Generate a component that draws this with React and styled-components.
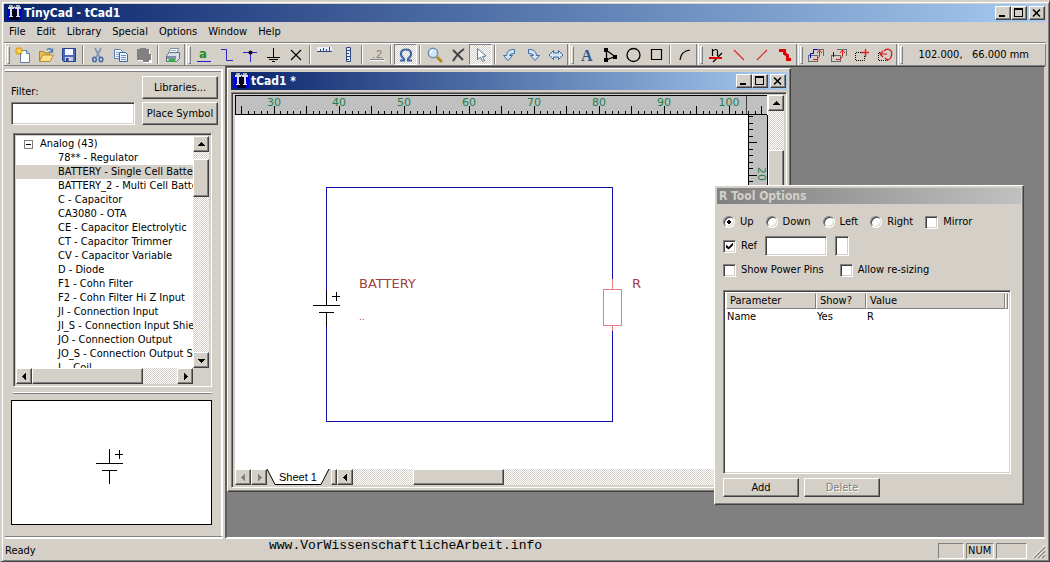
import React from 'react';
import styled, {createGlobalStyle, css} from 'styled-components';

const ui = "'DejaVu Sans Condensed', 'DejaVu Sans', sans-serif";

const raised = css`
  border: 1px solid;
  border-color: #fff #404040 #404040 #fff;
  box-shadow: inset -1px -1px 0 #808080;
`;

const sunken = css`
  border: 1px solid;
  border-color: #808080 #fff #fff #808080;
  box-shadow: inset 1px 1px 0 #404040, inset -1px -1px 0 #d4d0c8;
`;

const hatch = css`
  background: repeating-conic-gradient(#fff 0 25%, #d4d0c8 0 50%) 0 0 / 2px 2px;
`;

const GlobalStyle = createGlobalStyle`
  * {
    box-sizing: border-box;
  }

  body {
    margin: 0;
    background: #d4d0c8;
    font-family: ${ui};
    font-size: 11px;
    line-height: 14px;
    color: #000;
  }

  button, input, table {
    font: inherit;
    color: inherit;
  }

  svg {
    display: block;
    flex: none;
  }
`;

const Frame = styled.div`
  display: flex;
  flex-direction: column;
  min-height: 100vh;
  padding: 2px 3px 0 2px;
  background: #d4d0c8;
  border: 1px solid;
  border-color: #d4d0c8 #404040 #404040 #d4d0c8;
  box-shadow: inset 1px 1px 0 #fff, inset -1px -1px 0 #808080;
  border-top-width: 2px;
  border-left-width: 2px;
`;

const TitleBar = styled.header`
  display: flex;
  align-items: center;
  height: 18px;
  padding: 0 1px 0 3px;
  gap: 2px;
  color: #fff;
  background: linear-gradient(90deg, #0a246a, #a6caf0);
`;

const Title = styled.h1`
  flex: 1;
  margin: 0;
  font-size: 12px;
  line-height: 16px;
  font-weight: bold;
  white-space: nowrap;
`;

const Caption = styled.div`
  display: flex;

  button:last-child {
    margin-left: 2px;
  }
`;

const CaptionButton = styled.button`
  display: flex;
  align-items: center;
  justify-content: center;
  width: 16px;
  height: 14px;
  padding: 0;
  background: #d4d0c8;
  ${raised}
`;

const Menu = styled.nav`
  display: flex;
  align-items: center;
  height: 20px;
  padding-left: 5px;
  gap: 11px;
`;

const MenuItem = styled.button`
  padding: 0;
  border: 0;
  background: none;
`;

const Toolbar = styled.div`
  display: flex;
  height: 24px;
  border-top: 1px solid #808080;
  box-shadow: inset 0 1px 0 #fff;
  padding-top: 1px;
  border-bottom: 1px solid #808080;
`;

const Band = styled.div`
  display: flex;
  align-items: center;
  flex: ${p => (p.$grow ? 1 : 'none')};
  padding-left: 1px;
  margin-left: 1px;
  border-left: 1px solid #fff;
  border-right: 1px solid #808080;
`;

const Grip = styled.span`
  width: 3px;
  height: 18px;
  margin-right: 1px;
  border: 1px solid;
  border-color: #fff #808080 #808080 #fff;
`;

const ToolButton = styled.button`
  display: flex;
  align-items: center;
  justify-content: center;
  width: 23px;
  height: 21px;
  padding: 0;
  border: 1px solid transparent;
  background: none;
  ${p => p.$on && css`
    ${hatch}
    border-color: #808080 #fff #fff #808080;
  `}
`;

const ToolSep = styled.span`
  width: 2px;
  height: 19px;
  margin: 0 2px;
  border-left: 1px solid #808080;
  border-right: 1px solid #fff;
`;

const Position = styled.output`
  flex: 1;
  padding-right: 16px;
  text-align: right;
  white-space: pre;
`;

const Workspace = styled.div`
  display: flex;
  flex: 1;
`;

const Dock = styled.aside`
  display: flex;
  flex-direction: column;
  flex: none;
  width: 221px;
  padding: 3px 2px 2px 1px;
`;

const DockInner = styled.div`
  display: flex;
  flex-direction: column;
  flex: 1;
  padding: 5px 3px 11px 6px;
  border-top: 2px solid #fff;
  border-right: 2px solid #fff;
  border-bottom: 1px solid #808080;
  box-shadow: 0 2px 0 #fff, inset 0 1px 0 #808080;
`;

const FilterRow = styled.div`
  display: grid;
  grid-template-columns: 1fr 76px;
  column-gap: 7px;
  row-gap: 3px;
  padding-bottom: 8px;
`;

const FilterLabel = styled.label`
  align-self: end;
`;

const TextBox = styled.input`
  width: ${p => p.$width || '100%'};
  height: ${p => p.$height || '23px'};
  padding: 2px 4px;
  border-radius: 0;
  outline: 0;
  background: #fff;
  ${sunken}
`;

const PushButton = styled.button`
  height: ${p => p.$height || '23px'};
  padding: 0;
  background: #d4d0c8;
  white-space: nowrap;
  ${raised}

  &:disabled {
    color: #808080;
    text-shadow: 1px 1px 0 #fff;
  }
`;

const Tree = styled.div`
  display: grid;
  grid-template-columns: 1fr 16px;
  grid-template-rows: 232px 16px;
  margin: 0 6px 0 2px;
  padding: 2px;
  background: #d4d0c8;
  ${sunken}
`;

const TreeList = styled.ul`
  margin: 0;
  padding: 1px 0 0;
  overflow: hidden;
  list-style: none;
  background: #fff;
`;

const TreeItem = styled.li`
  display: flex;
  align-items: center;
  gap: 7px;
  height: 14px;
  padding-left: ${p => (p.$root ? 8 : 0)}px;
  margin-left: ${p => (p.$root ? 0 : 42)}px;
  white-space: nowrap;
  background: ${p => (p.$selected ? '#d4d0c8' : 'none')};
  box-shadow: ${p => (p.$selected ? '-42px 0 0 #d4d0c8' : 'none')};
`;

const ScrollBar = styled.div`
  display: flex;
  flex-direction: ${p => (p.$vertical ? 'column' : 'row')};
  min-width: 0;
  flex: ${p => (p.$grow ? 1 : 'none')};
  ${hatch}
`;

const ScrollButton = styled.button`
  display: flex;
  align-items: center;
  justify-content: center;
  flex: none;
  width: 16px;
  height: 16px;
  padding: 0;
  background: #d4d0c8;
  ${raised}
`;

const Thumb = styled.div`
  flex: none;
  background: #d4d0c8;
  margin-top: ${p => (p.$vertical && p.$before) || 0}px;
  margin-left: ${p => (!p.$vertical && p.$before) || 0}px;
  width: ${p => (p.$vertical ? 16 : p.$size)}px;
  height: ${p => (p.$vertical ? p.$size : 16)}px;
  ${raised}
`;

const Spacer = styled.span`
  flex: 1;
`;

const DockRule = styled.hr`
  width: 199px;
  margin: 5px 0 6px 2px;
  border: 0;
  border-top: 1px solid #fff;
  border-bottom: 1px solid #808080;
`;

const Preview = styled.div`
  display: flex;
  flex: 1;
  align-items: center;
  justify-content: center;
  margin-right: 6px;
  padding: 8px 4px 0 0;
  border: 1px solid #000;
  background: #fff;
`;

const Desktop = styled.main`
  position: relative;
  flex: 1;
  background: #808080;
  border: 2px solid;
  border-color: #404040 #d4d0c8 #fff #606060;
  border-top-width: 1px;
`;

// child windows float over the desktop
const ChildWindow = styled.section`
  position: absolute;
  left: 0;
  top: 1px;
  width: 564px;
  height: 424px;
  display: flex;
  flex-direction: column;
  padding: 3px;
  background: #d4d0c8;
  ${raised}
`;

const Client = styled.div`
  display: flex;
  flex-direction: column;
  flex: 1;
  margin-top: 2px;
  padding: 2px 2px 2px 3px;
  ${sunken}
`;

const SheetArea = styled.div`
  display: flex;
  flex: 1;
`;

const Sheet = styled.div`
  display: grid;
  grid-template-columns: 1fr 20px;
  grid-template-rows: 20px 1fr;
  flex: 1;
  background: #fff;
`;

const TopEdge = styled.div`
  grid-column: 1 / 3;
`;

const SheetTabs = styled.footer`
  display: flex;
  height: 16px;
`;

const TabShape = styled.div`
  position: relative;
  display: flex;
  width: 64px;

  svg {
    position: absolute;
    inset: 0;
  }
`;

const SheetTab = styled.button`
  position: relative;
  flex: 1;
  padding: 0 2px 0 0;
  border: 0;
  font-family: 'Liberation Sans', sans-serif;
  background: none;
`;

const Splitter = styled.span`
  width: 6px;
  background: #d4d0c8;
  ${raised}
`;

const ToolWindow = styled.section`
  position: absolute;
  left: 487px;
  top: 118px;
  width: 310px;
  height: 320px;
  display: flex;
  flex-direction: column;
  padding: 2px;
  background: #d4d0c8;
  ${raised}
`;

const ToolTitle = styled.h2`
  margin: 0;
  padding: 0 2px;
  font-size: 12px;
  line-height: 16px;
  font-weight: bold;
  color: #d4d0c8;
  background: linear-gradient(90deg, #808080, #c0c0c0);
`;

const Options = styled.form`
  display: flex;
  flex-direction: column;
  flex: 1;
  padding: 6px 10px 5px 6px;
`;

const OptionRow = styled.div`
  display: flex;
  align-items: center;
  height: 24px;
  gap: ${p => p.$gap}px;
`;

const Choice = styled.label`
  display: flex;
  align-items: center;
  gap: 5px;
  white-space: nowrap;
`;

const Radio = styled.input.attrs({type: 'radio'})`
  appearance: none;
  width: 12px;
  height: 12px;
  margin: 0;
  border-radius: 50%;
  background: #fff;
  ${sunken}

  &:checked {
    background: radial-gradient(circle, #000 2px, #fff 2px);
  }
`;

const Check = styled.input.attrs({type: 'checkbox'})`
  appearance: none;
  display: grid;
  place-items: center;
  width: 13px;
  height: 13px;
  margin: 0;
  background: #fff;
  ${sunken}

  &:checked::before {
    content: '';
    width: 7px;
    height: 7px;
    background: #000;
    clip-path: polygon(0 30%, 38% 65%, 100% 0, 100% 40%, 38% 100%, 0 70%);
  }
`;

const ParamBox = styled.div`
  flex: 1;
  margin: 8px 0 4px;
  padding: 2px;
  background: #fff;
  ${sunken}
`;

const ParamTable = styled.table`
  width: 100%;
  border-collapse: separate;
  border-spacing: 0;
  table-layout: fixed;

  th {
    height: 16px;
    padding: 0 3px;
    font-weight: normal;
    text-align: left;
    background: #d4d0c8;
    border: 1px solid;
    border-color: #d4d0c8 #808080 #808080 #fff;
  }

  td {
    height: 15px;
    padding: 0 1px;
  }
`;

const Buttons = styled.div`
  display: grid;
  grid-template-columns: 76px 76px;
  gap: 5px;
`;

const StatusBar = styled.footer`
  display: flex;
  align-items: center;
  height: 22px;
  gap: 2px;
  padding: 1px 0 0 1px;
`;

const StatusText = styled.span`
  width: 262px;
`;

const SiteName = styled.span`
  flex: 1;
  align-self: flex-start;
  font-family: 'Liberation Mono', monospace;
  font-size: 13px;
  line-height: 12px;
`;

const Pane = styled.span`
  width: ${p => p.$width}px;
  height: 16px;
  padding-left: 1px;
  border: 1px solid;
  border-color: #808080 #fff #fff #808080;
`;

const arrows = {
    up: 'M1 6h7v-1h-1v-1h-1v-1h-1v-1h-1v1h-1v1h-1v1h-1z',
    down: 'M1 3h7v1h-1v1h-1v1h-1v1h-1v-1h-1v-1h-1v-1h-1z',
    left: 'M6 1v7h-1v-1h-1v-1h-1v-1h-1v-1h1v-1h1v-1h1v-1z',
    right: 'M3 1v7h1v-1h1v-1h1v-1h1v-1h-1v-1h-1v-1h-1v-1z',
};

const Arrow = ({dir, color = '#000'}) => (
    <svg width="9" height="9" fill={color} shapeRendering="crispEdges"><path d={arrows[dir]}/></svg>
);

const Logo = () => (
    <svg width="15" height="16" viewBox="0 0 15 16">
        <path fill="#0000e0" d="M0 2h15v13H0z"/>
        <path fill="#00001a" d="M5 4h5v7H5zM3 11h9v4H3z"/>
        <path fill="#d8dce8" d="M1 2h6v2H5v7h1v1H2v-1h1V4H1zM8 2h6v2h-2v7h1v1H9v-1h1V4H8z"/>
        <path fill="#a8b0b0" d="M2 0h4v2H2zM9 0h4v2H9zM7 1h1v2H7z"/>
    </svg>
);

const WindowButtons = () => (
    <Caption>
        <CaptionButton aria-label="Minimize">
            <svg width="10" height="10"><path d="M1 7h6v2H1z"/></svg>
        </CaptionButton>
        <CaptionButton aria-label="Maximize">
            <svg width="10" height="10" shapeRendering="crispEdges">
                <path fillRule="evenodd" d="M0 0h9v9H0zM1 2v6h7V2z"/>
            </svg>
        </CaptionButton>
        <CaptionButton aria-label="Close">
            <svg width="10" height="10"><path stroke="#000" strokeWidth="1.600" d="M1 1.500l7 7M8 1.500l-7 7"/></svg>
        </CaptionButton>
    </Caption>
);

const icons = {
    new: <>
        <path fill="#fff" stroke="#5b7fa6" d="M5.500 3.500h6l3 3v9h-9z"/>
        <path fill="#bcd0e8" stroke="#5b7fa6" d="M11.500 3.500v3h3"/>
        <path stroke="#e89a00" strokeWidth="1.500" d="M4 0v8M0 4h8M1 1l6 6M7 1L1 7"/>
        <circle cx="4" cy="4" r="2" fill="#ffe45c"/>
    </>,
    open: <>
        <path fill="#f0c050" stroke="#a9822c" d="M1.500 14.500v-10h4l1 1.500h5v3"/>
        <path fill="#fde08c" stroke="#b68a30" d="M1.500 14.500l3-6.500h11l-3.500 6.500z"/>
        <path fill="none" stroke="#4a7ab0" strokeWidth="1.300" d="M9 3q3-3 5 1M14.500 1.500V5h-3.300"/>
    </>,
    save: <>
        <path fill="#4a68c0" stroke="#283c90" d="M1.500 1.500h13v13h-12l-1-1z"/>
        <path fill="#f4f7ff" d="M4 2h8v6H4z"/>
        <path fill="#c8d0e0" d="M4 10h8v4H4z"/>
        <path fill="#283c90" d="M5 11h2.500v3H5z"/>
    </>,
    cut: <>
        <path fill="none" stroke="#8498b0" strokeWidth="1.800" d="M5 1l4.500 9M11 1L6.500 10"/>
        <ellipse cx="4.500" cy="12.500" rx="1.800" ry="2.300" fill="none" stroke="#3c68a4" strokeWidth="1.500"/>
        <ellipse cx="11" cy="12.500" rx="1.800" ry="2.300" fill="none" stroke="#3c68a4" strokeWidth="1.500"/>
    </>,
    copy: <>
        <path fill="#eef4ff" stroke="#6080b0" d="M1.500 2.500h6l2 2v7h-8z"/>
        <path stroke="#86a6d4" d="M3 5.500h4M3 7.500h4M3 9.500h3"/>
        <path fill="#eef4ff" stroke="#40669c" d="M6.500 5.500h6l2 2v7h-8z"/>
        <path stroke="#6c94cc" d="M8 8.500h5M8 10.500h5M8 12.500h5"/>
    </>,
    paste: <>
        <path fill="#fff" d="M2 3h12v5h2v8H7v-2H2z"/>
        <path fill="#808080" d="M1 2h3V1h6v1h3v5h2v6h-2v2H7v-2H1z"/>
    </>,
    print: <>
        <path fill="#fff" stroke="#7890a8" d="M5.500 1.500h8l-2 5h-8z"/>
        <path fill="#d6dee6" stroke="#607080" d="M1.500 8.500l3-3h10v6l-3 3h-10z"/>
        <path fill="#8090a0" d="M2 9h9v3H2z"/>
        <path fill="#30b040" d="M4 12h7l-2 3H3z"/>
        <path stroke="#9ab" d="M6 3.500h5"/>
    </>,
    label: <>
        <text x="3" y="11" fontFamily="DejaVu Sans Condensed" fontWeight="bold" fontSize="13" fill="#209020">a</text>
        <path stroke="#2020c0" d="M1 14.500h14"/>
    </>,
    wire: <path fill="none" stroke="#2828c8" d="M2 2.500h5.500v11H14"/>,
    junction: <>
        <path stroke="#2828c8" d="M1 5.500h14M8.500 5v10"/>
        <circle cx="8.500" cy="5.500" r="2"/>
    </>,
    ground: <path stroke="#000" d="M8.500 1v10M2 10.500h13M4 12.500h9M7 14.500h3"/>,
    cross: <path stroke="#000" strokeWidth="1.100" d="M3 3l10 10M13 3L3 13"/>,
    rulerH: <>
        <path fill="#e8f0ff" d="M0 0h15v4H0z"/>
        <path stroke="#304878" fill="none" d="M0 4.500h15M3.500 2v2M6.500 1v3M9.500 2v2M12.500 0v4"/>
    </>,
    rulerV: <>
        <path fill="#e8f0ff" stroke="#304878" d="M6.500 .5h4v14h-4z"/>
        <path stroke="#304878" d="M7 3.500h3M7 6.500h2M7 9.500h3M7 12.500h2"/>
    </>,
    decimals: <>
        <text x="7" y="11" fontFamily="Liberation Sans" fontSize="11" fill="#808080">2</text>
        <path stroke="#808080" d="M1 12.500h14M4 10.500h1"/>
        <path stroke="#fff" d="M1 13.500h15"/>
    </>,
    omega: <path fill="none" stroke="#3c64a8" strokeWidth="2.200"
                 d="M2 13.500h4v-1.500C1 8 2.500 2.500 8 2.500S15 8 10 12v1.500h4"/>,
    zoom: <>
        <path stroke="#b88820" strokeWidth="3" d="M10 10l5 5"/>
        <circle cx="6" cy="6" r="4.700" fill="#cfe6fa" stroke="#7090b0" strokeWidth="1.500"/>
        <path fill="none" stroke="#fff" strokeWidth="1.500" d="M3.500 6q0-2.500 2.500-2.500"/>
    </>,
    remove: <path stroke="#404448" strokeWidth="2" fill="none" d="M3 3l10 10M14 2Q8 6 3 14"/>,
    pointer: <path fill="#fff" stroke="#5878a0" d="M4.500 1.500v11l3-2.500 2 4.500 2-1-2-4 3.500-.5z"/>,
    rotLeft: <path fill="#d4e4f4" stroke="#3c6ca0"
                   d="M12.500 2.500Q5 2 4.500 8.500h-3L6 13.500l4.500-5h-3q0-2 5-2z"/>,
    rotRight: <path fill="#d4e4f4" stroke="#3c6ca0"
                    d="M3.500 2.500Q11 2 11.500 8.500h3L10 13.500l-4.500-5h3q0-2-5-2z"/>,
    flip: <path fill="#d4e4f4" stroke="#3c6ca0" d="M1 8l4.500-4.500V6h5V3.500L15 8l-4.500 4.500V10h-5v2.500z"/>,
    text: <text x="2" y="14" fontFamily="Liberation Serif" fontWeight="bold" fontSize="16" fill="#305890">A</text>,
    polygon: <>
        <path fill="none" stroke="#000" strokeWidth="1.300" d="M4.500 3v10M4 3l9 6.500L4 13"/>
        <path d="M2 1h4v4H2zM11 8h4v4h-4zM2 11h4v4H2z"/>
    </>,
    circle: <circle cx="8.500" cy="8" r="6.500" fill="none" stroke="#000" strokeWidth="1.300"/>,
    rect: <path fill="none" stroke="#000" strokeWidth="1.200" d="M3.500 2.500h10v10h-10z"/>,
    arc: <path fill="none" stroke="#000" strokeWidth="1.200" d="M3 13Q4 4 13 3"/>,
    power: <>
        <path fill="none" stroke="#000" strokeWidth="1.200" d="M4.500 9V2M4.500 4q4-3 5 0v5M5 15L14 6"/>
        <path stroke="#e00000" strokeWidth="2" d="M1 11h13"/>
    </>,
    lineDown: <path stroke="#e02020" strokeWidth="1.100" d="M3 3l10 10"/>,
    lineUp: <path stroke="#e02020" strokeWidth="1.100" d="M3 13L13 3"/>,
    bus: <path fill="none" stroke="#e00000" strokeWidth="3" d="M2 3.500h5.500v3l3 2v4H14"/>,
    dragBlock: <>
        <path fill="none" stroke="#000" strokeDasharray="1 1" d="M.5 8.500h9v6h-9zM6.500 2.500h9v7"/>
        <path fill="none" stroke="#0000d0" d="M2.500 11V6.500h3v-4h4"/>
        <path fill="none" stroke="#d81818" d="M5 12.500h4l2.500-3V4M9 6l2.500-3L14 6"/>
    </>,
    moveBlock: <>
        <path fill="none" stroke="#000" strokeDasharray="1 1" d="M.5 8.500h9v6h-9zM6.500 2.500h9v7"/>
        <path fill="none" stroke="#0000d0" d="M2.500 5v5"/>
        <path fill="none" stroke="#d81818" d="M5 12.500h4l2.500-3V4M9 6l2.500-3L14 6"/>
    </>,
    duplicate: <>
        <path fill="none" stroke="#000" strokeDasharray="1 1" d="M7 5.500H1.500v8h9V9"/>
        <path stroke="#e02020" strokeWidth="1.400" d="M7 5.500h8M11.500 2v8"/>
    </>,
    rotateBlock: <>
        <path fill="none" stroke="#000" strokeDasharray="1 1" d="M5 5.500H1.500v8h9V12"/>
        <path fill="none" stroke="#d01010" strokeWidth="1.200" d="M7 4Q10 1 13 3t1 7-6 1M3 7h7M6 4L3 7l3 3"/>
    </>,
};

const Icon = ({name}) => <svg width="16" height="16" viewBox="0 0 16 16">{icons[name]}</svg>;

const bands = [
    ['new', 'open', 'save', '|', 'cut', 'copy', 'paste', '|', 'print'],
    ['label', 'wire', 'junction', 'ground', 'cross', '|', 'rulerH', 'rulerV', '|', 'decimals', '|', 'omega', '|',
        'zoom', 'remove', 'pointer', '|', 'rotLeft', 'rotRight', 'flip'],
    ['text', 'polygon', 'circle', 'rect', '|', 'arc'],
    ['power', 'lineDown', 'lineUp', 'bus'],
    ['dragBlock', 'moveBlock', 'duplicate', 'rotateBlock'],
];

const symbols = [
    '78** - Regulator', 'BATTERY - Single Cell Battery', 'BATTERY_2 - Multi Cell Battery', 'C - Capacitor',
    'CA3080 - OTA', 'CE - Capacitor Electrolytic', 'CT - Capacitor Trimmer', 'CV - Capacitor Variable', 'D - Diode',
    'F1 - Cohn Filter', 'F2 - Cohn Filter Hi Z Input', 'JI - Connection Input', 'JI_S - Connection Input Shield',
    'JO - Connection Output', 'JO_S - Connection Output Shield', 'L - Coil',
];

// one unit is 6.5px, every fifth tick is a long one
const units = count => Array.from({length: count}, (_, i) => i);

const RulerTop = () => (
    <svg width="532" height="20">
        <path fill="#c0c0c0" d="M0 0h532v20H0z"/>
        <path d="M0 0h532v1H0zM0 19h532v1H0zM0 0h1v20H0z"/>
        {units(81).map(i => {
            const x = Math.round(6 + i * 6.5);
            return <path key={i} shapeRendering="crispEdges" d={`M${x} ${i % 5 ? 16 : 11}h1v8h-1z`}/>;
        })}
        {[30, 40, 50, 60, 70, 80, 90, 100].map((n, i) => (
            <text key={n} x={39 + i * 65} y="11" textAnchor="middle" fontFamily="DejaVu Sans" fontSize="11"
                  fill="#208050">{n}</text>
        ))}
        <path d="M511 1h1v18h-1z" fill="#404040"/>
    </svg>
);

const RulerSide = () => (
    <svg width="20" height="354">
        <path fill="#c0c0c0" d="M0 0h20v354H0z"/>
        <path d="M0 0h1v354H0zM19 0h1v354h-1z"/>
        {units(54).map(i => (
            <path key={i} shapeRendering="crispEdges" d={`M0 ${Math.round(1 + i * 6.5)}h${i % 5 === 4 ? 9 : 5}v1H0z`}/>
        ))}
        <text transform="translate(10 59) rotate(90)" textAnchor="middle" fontFamily="DejaVu Sans" fontSize="11"
              fill="#208050">20</text>
    </svg>
);

const Battery = () => (
    <path stroke="#000" fill="none" shapeRendering="crispEdges"
          d="M13.500 0v14M0 14.500h27M6 21.500h15M13.500 21v14M19 5.500h8M23.500 1v9"/>
);

const Schematic = () => (
    <svg width="512" height="354" shapeRendering="crispEdges">
        <path fill="none" stroke="#1010a8" d="M91.500 176V72.500h286v92M377.500 215v91h-286v-95"/>
        <g transform="translate(78 176)"><Battery/></g>
        <path fill="none" stroke="#e08080" d="M377.500 164v11M377.500 211v5M368.500 174.500h18v36h-18z"/>
        <g fontFamily="DejaVu Sans" fontSize="13" fill="#a04040">
            <text x="124" y="173">BATTERY</text>
            <text x="397" y="173">R</text>
            <text x="124" y="205" fontSize="9">..</text>
        </g>
    </svg>
);

const LibraryPanel = () => (
    <Dock>
        <DockInner>
            <FilterRow>
                <FilterLabel htmlFor="filter">Filter:</FilterLabel>
                <PushButton>Libraries...</PushButton>
                <TextBox id="filter"/>
                <PushButton>Place Symbol</PushButton>
            </FilterRow>
            <Tree>
                <TreeList>
                    <TreeItem $root>
                        <svg width="9" height="9" shapeRendering="crispEdges">
                            <path fill="#fff" stroke="#808080" d="M.5 .5h8v8h-8z"/>
                            <path d="M2 4h5v1H2z"/>
                        </svg>
                        Analog (43)
                    </TreeItem>
                    {symbols.map((name, i) => <TreeItem key={name} $selected={i === 1}>{name}</TreeItem>)}
                </TreeList>
                <ScrollBar $vertical>
                    <ScrollButton aria-label="Up"><Arrow dir="up"/></ScrollButton>
                    <Thumb $vertical $before={7} $size={38}/>
                    <Spacer/>
                    <ScrollButton aria-label="Down"><Arrow dir="down"/></ScrollButton>
                </ScrollBar>
                <ScrollBar>
                    <ScrollButton aria-label="Left"><Arrow dir="left"/></ScrollButton>
                    <Thumb $size={111}/>
                    <Spacer/>
                    <ScrollButton aria-label="Right"><Arrow dir="right"/></ScrollButton>
                </ScrollBar>
            </Tree>
            <DockRule/>
            <Preview>
                <svg width="28" height="36"><Battery/></svg>
            </Preview>
        </DockInner>
    </Dock>
);

const DesignWindow = () => (
    <ChildWindow>
        <TitleBar>
            <Logo/>
            <Title as="h2">tCad1 *</Title>
            <WindowButtons/>
        </TitleBar>
        <Client>
            <SheetArea>
                <Sheet>
                    <TopEdge><RulerTop/></TopEdge>
                    <Schematic/>
                    <RulerSide/>
                </Sheet>
                <ScrollBar $vertical>
                    <ScrollButton aria-label="Up"><Arrow dir="up"/></ScrollButton>
                    <Thumb $vertical $before={39} $size={90}/>
                    <Spacer/>
                    <ScrollButton aria-label="Down"><Arrow dir="down"/></ScrollButton>
                </ScrollBar>
            </SheetArea>
            <SheetTabs>
                <ScrollButton aria-label="Previous sheet"><Arrow dir="left" color="#808080"/></ScrollButton>
                <ScrollButton aria-label="Next sheet"><Arrow dir="right" color="#808080"/></ScrollButton>
                <TabShape>
                    <svg width="64" height="16">
                        <path fill="#d4d0c8" d="M0 0h64v16H0z"/>
                        <path fill="#fff" stroke="#000" d="M0 0l8 15.500h46L62 0"/>
                    </svg>
                    <SheetTab>Sheet 1</SheetTab>
                </TabShape>
                <Splitter/>
                <ScrollBar $grow>
                    <ScrollButton aria-label="Left"><Arrow dir="left"/></ScrollButton>
                    <Thumb $before={60} $size={91}/>
                    <Spacer/>
                    <ScrollButton aria-label="Right"><Arrow dir="right"/></ScrollButton>
                </ScrollBar>
            </SheetTabs>
        </Client>
    </ChildWindow>
);

const ToolOptions = () => (
    <ToolWindow>
        <ToolTitle>R Tool Options</ToolTitle>
        <Options onSubmit={e => e.preventDefault()}>
            <OptionRow $gap={12}>
                {['Up', 'Down', 'Left', 'Right'].map(dir => (
                    <Choice key={dir}><Radio name="dir" defaultChecked={dir === 'Up'}/>{dir}</Choice>
                ))}
                <Choice><Check/>Mirror</Choice>
            </OptionRow>
            <OptionRow $gap={8}>
                <Choice><Check defaultChecked/>Ref</Choice>
                <TextBox aria-label="Reference" $width="62px" $height="20px"/>
                <TextBox aria-label="Part" $width="14px" $height="20px"/>
            </OptionRow>
            <OptionRow $gap={16}>
                <Choice><Check/>Show Power Pins</Choice>
                <Choice><Check/>Allow re-sizing</Choice>
            </OptionRow>
            <ParamBox>
                <ParamTable>
                    <colgroup>
                        <col width="90"/>
                        <col width="50"/>
                        <col width="139"/>
                        <col/>
                    </colgroup>
                    <thead>
                        <tr>
                            <th>Parameter</th>
                            <th>Show?</th>
                            <th>Value</th>
                            <th aria-hidden="true"/>
                        </tr>
                    </thead>
                    <tbody>
                        <tr>
                            <td>Name</td>
                            <td>Yes</td>
                            <td>R</td>
                            <td/>
                        </tr>
                    </tbody>
                </ParamTable>
            </ParamBox>
            <Buttons>
                <PushButton type="button" $height="19px">Add</PushButton>
                <PushButton type="button" $height="19px" disabled>Delete</PushButton>
            </Buttons>
        </Options>
    </ToolWindow>
);

const App = () => {
    return (
        <Frame>
            <GlobalStyle/>
            <TitleBar>
                <Logo/>
                <Title>TinyCad - tCad1</Title>
                <WindowButtons/>
            </TitleBar>
            <Menu>
                {['File', 'Edit', 'Library', 'Special', 'Options', 'Window', 'Help'].map(item => (
                    <MenuItem key={item}>{item}</MenuItem>
                ))}
            </Menu>
            <Toolbar>
                {bands.map((band, b) => (
                    <Band key={b}>
                        <Grip/>
                        {band.map((name, i) => name === '|'
                            ? <ToolSep key={i}/>
                            : <ToolButton key={i} aria-label={name} $on={name === 'omega' || name === 'pointer'}>
                                <Icon name={name}/>
                            </ToolButton>
                        )}
                    </Band>
                ))}
                <Band $grow>
                    <Grip/>
                    <Position>102.000,   66.000 mm</Position>
                </Band>
            </Toolbar>
            <Workspace>
                <LibraryPanel/>
                <Desktop>
                    <DesignWindow/>
                    <ToolOptions/>
                </Desktop>
            </Workspace>
            <StatusBar>
                <StatusText>Ready</StatusText>
                <SiteName>www.VorWissenschaftlicheArbeit.info</SiteName>
                <Pane $width={26}/>
                <Pane $width={28}>NUM</Pane>
                <Pane $width={31}/>
                <svg width="17" height="18">
                    <path stroke="#808080" strokeWidth="1.500" d="M5 16L16 5M9 16l7-7M13 16l3-3"/>
                    <path stroke="#fff" d="M3.500 16L16 3.500M7.500 16L16 7.500M11.500 16l4.500-4.500"/>
                </svg>
            </StatusBar>
        </Frame>
    );
};

export default App;
